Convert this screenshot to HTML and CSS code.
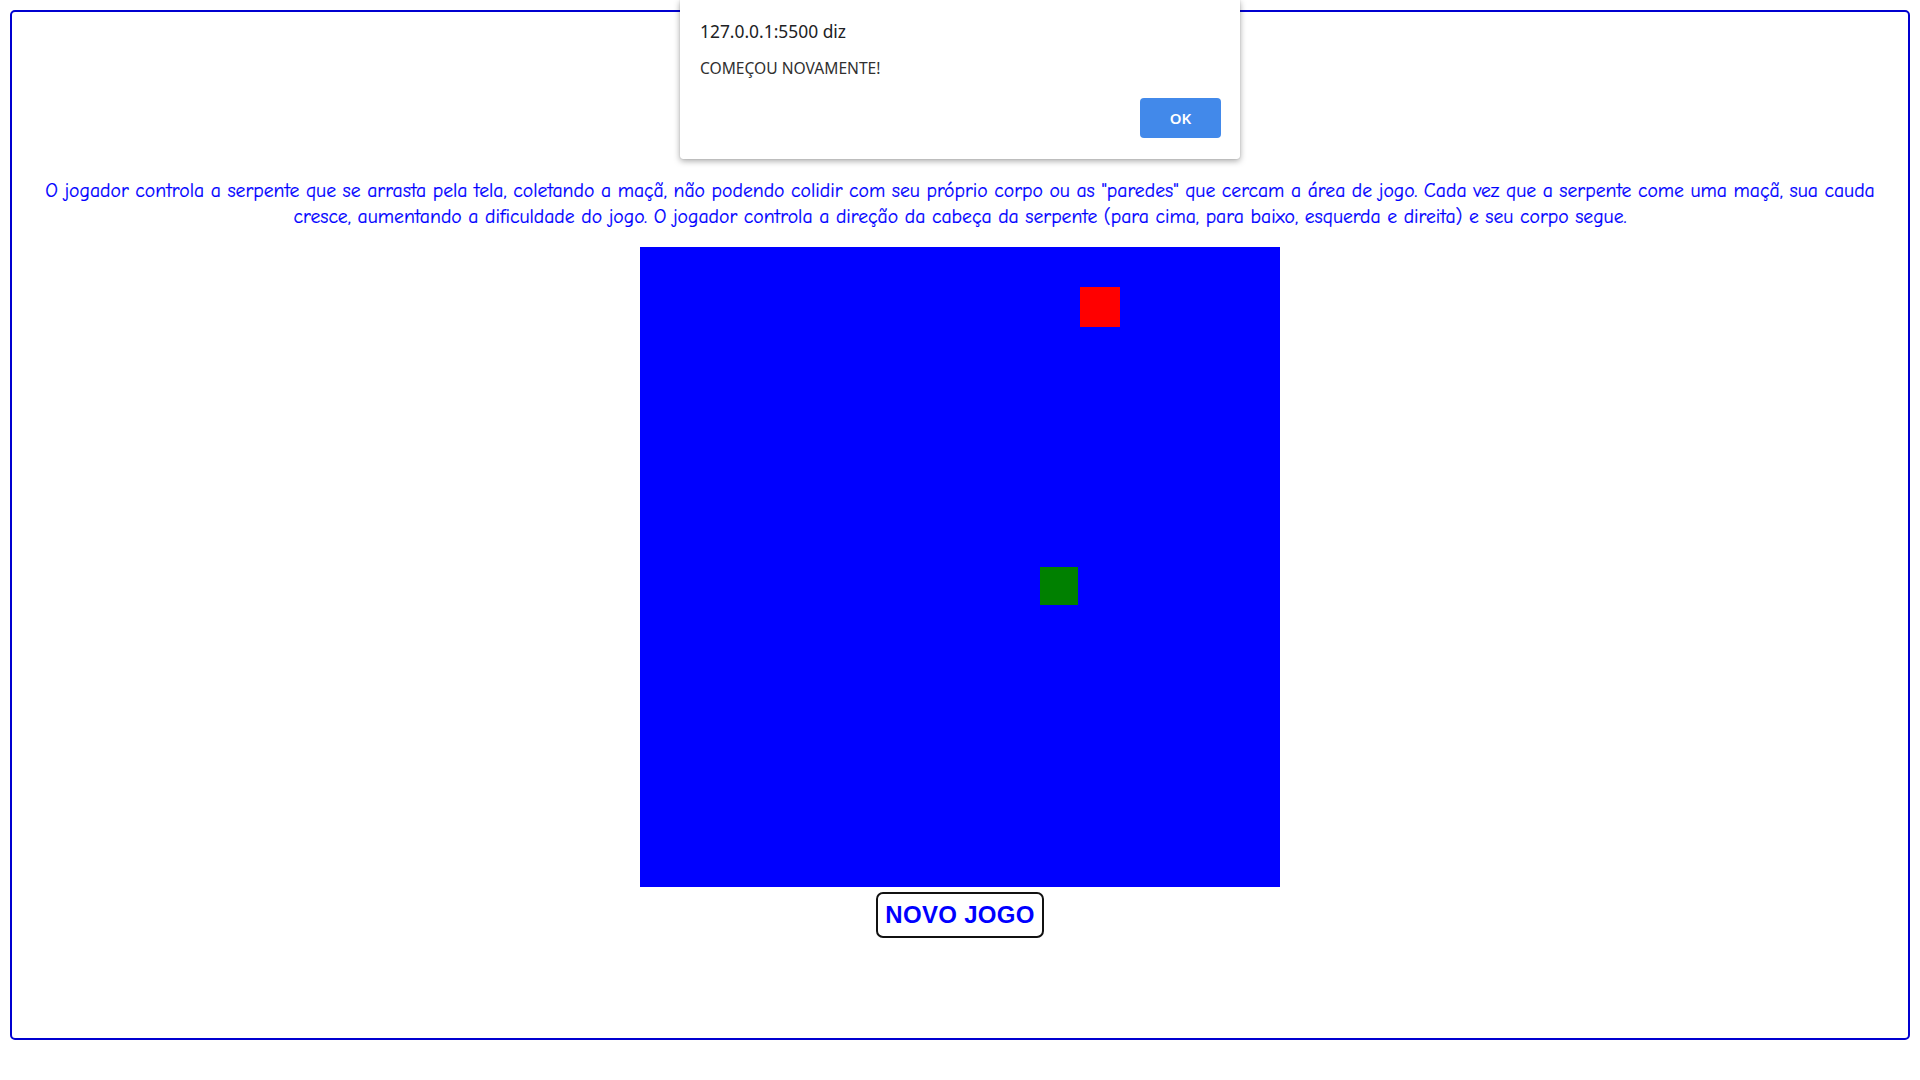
FILE: index.html
```html
<!DOCTYPE html>
<html lang="pt-BR">
<head>
<meta charset="utf-8">
<title>Jogo da Cobrinha</title>
<link rel="stylesheet" href="styles.css">
</head>
<body>
<main class="frame">
  <p class="intro">O jogador controla a serpente que se arrasta pela tela, coletando a maçã, não podendo colidir com seu próprio corpo ou as "paredes" que cercam a área de jogo. Cada vez que a serpente come uma maçã, sua cauda cresce, aumentando a dificuldade do jogo. O jogador controla a direção da cabeça da serpente (para cima, para baixo, esquerda e direita) e seu corpo segue.</p>
  <div class="board">
    <div class="apple"></div>
    <div class="snake"></div>
  </div>
  <button class="new-game" type="button">NOVO JOGO</button>
</main>
<div class="alert" role="alertdialog">
  <div class="alert-title">127.0.0.1:5500 diz</div>
  <div class="alert-msg">COMEÇOU NOVAMENTE!</div>
  <div class="alert-actions"><button class="alert-ok" type="button">OK</button></div>
</div>
</body>
</html>
```
FILE: styles.css
```css
html, body {
  margin: 0;
  padding: 0;
  background: #ffffff;
}
body {
  padding: 10px;
  height: 1080px;
  box-sizing: border-box;
}
.frame {
  box-sizing: border-box;
  height: 1030px;
  border: 2px solid #0000d0;
  border-radius: 5px;
  padding-top: 166px;
  display: flex;
  flex-direction: column;
  align-items: center;
}
.intro {
  margin: 0;
  width: 1852px;
  text-align: center;
  color: #0000ff;
  font-family: "Comic Sans MS", "Comic Neue", "Open Sans", sans-serif;
  font-size: 19.7px;
  line-height: 26px;
  -webkit-text-stroke: 0.2px #0000ff;
}
.board {
  margin-top: 17px;
  width: 640px;
  height: 640px;
  background: #0000ff;
  display: grid;
  grid-template-columns: repeat(16, 40px);
  grid-template-rows: repeat(16, 40px);
}
.apple {
  grid-column: 12;
  grid-row: 2;
  background: #ff0000;
}
.snake {
  grid-column: 11;
  grid-row: 9;
  width: 38px;
  height: 38px;
  background: #008000;
}
.new-game {
  margin-top: 5px;
  width: 168px;
  height: 46px;
  padding: 0;
  background: #ffffff;
  border: 2px solid #111111;
  border-radius: 7px;
  color: #0000ff;
  font-family: "Liberation Sans", Arial, sans-serif;
  font-weight: bold;
  font-size: 24px;
  letter-spacing: 0.3px;
}
.alert {
  position: absolute;
  top: 0;
  left: 680px;
  width: 560px;
  height: 159px;
  box-sizing: border-box;
  background: #ffffff;
  border-radius: 0 0 3px 3px;
  box-shadow: 0 2px 6px rgba(0, 0, 0, 0.35), 0 0 1px rgba(0, 0, 0, 0.3);
  padding: 20px 19px 0 20px;
  font-family: "Noto Sans", "Open Sans", sans-serif;
  color: #202124;
}
.alert-title {
  font-size: 17.4px;
  line-height: 22px;
}
.alert-msg {
  margin-top: 16px;
  font-size: 15.6px;
  line-height: 20px;
  color: #303030;
}
.alert-actions {
  display: flex;
  justify-content: flex-end;
  margin-top: 20px;
}
.alert-ok {
  width: 81px;
  height: 40px;
  border: none;
  border-radius: 4px;
  background: #4289ea;
  color: #ffffff;
  font-family: "Noto Sans", "Open Sans", sans-serif;
  font-weight: 600;
  font-size: 15px;
}
```
